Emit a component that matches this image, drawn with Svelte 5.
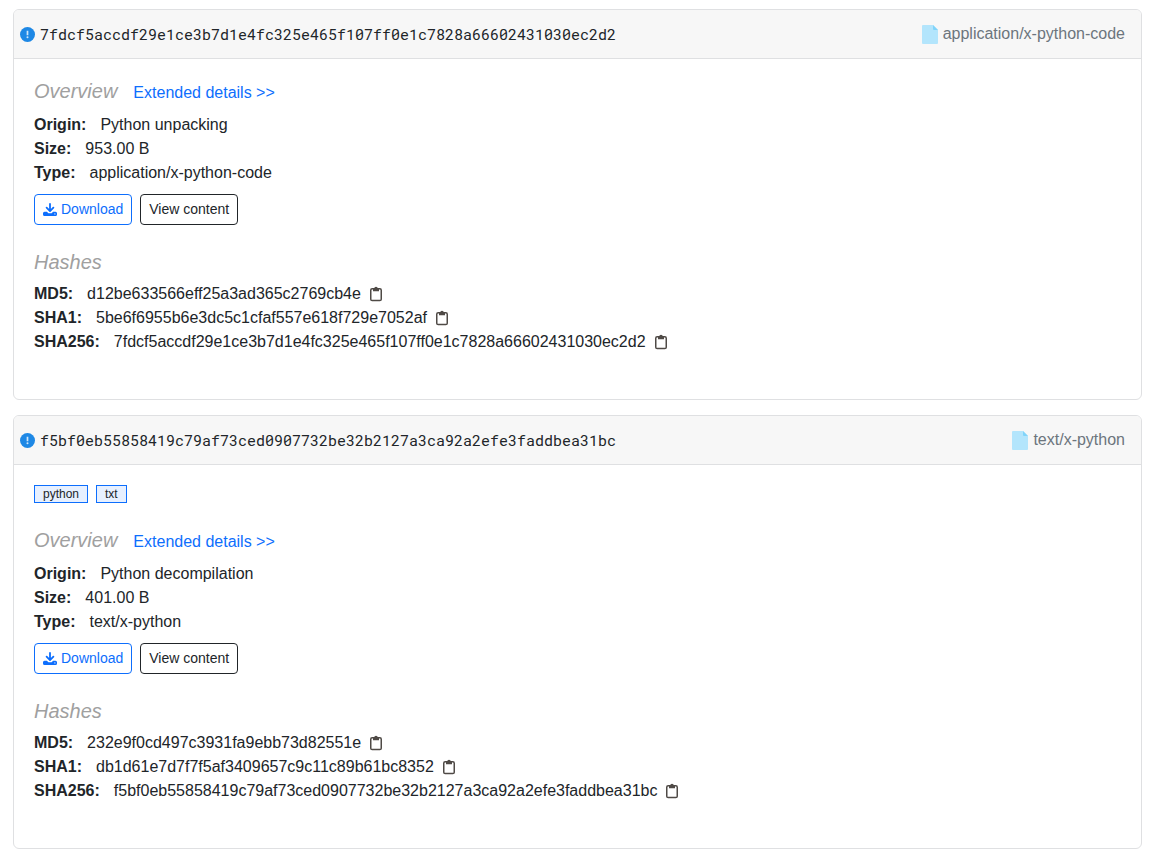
<script lang="ts">
  interface ExtractedFile {
    origin: string;
    size: string;
    type: string;
    tags: string[];
    md5: string;
    sha1: string;
    sha256: string;
  }

  const files: ExtractedFile[] = [
    {
      origin: 'Python unpacking',
      size: '953.00 B',
      type: 'application/x-python-code',
      tags: [],
      md5: 'd12be633566eff25a3ad365c2769cb4e',
      sha1: '5be6f6955b6e3dc5c1cfaf557e618f729e7052af',
      sha256: '7fdcf5accdf29e1ce3b7d1e4fc325e465f107ff0e1c7828a66602431030ec2d2',
    },
    {
      origin: 'Python decompilation',
      size: '401.00 B',
      type: 'text/x-python',
      tags: ['python', 'txt'],
      md5: '232e9f0cd497c3931fa9ebb73d82551e',
      sha1: 'db1d61e7d7f7f5af3409657c9c11c89b61bc8352',
      sha256: 'f5bf0eb55858419c79af73ced0907732be32b2127a3ca92a2efe3faddbea31bc',
    },
  ];

  function copy(value: string) {
    navigator.clipboard?.writeText(value);
  }
</script>

{#snippet detail(label: string, value: string)}
  <div class="row">
    <dt>{label}:</dt>
    <dd>{value}</dd>
  </div>
{/snippet}

{#snippet hash(label: string, value: string)}
  <div class="row">
    <dt>{label}:</dt>
    <dd>
      {value}
      <button class="copy" type="button" aria-label="Copy {label}" onclick={() => copy(value)}>
        <svg width="12" height="16" viewBox="0 0 12 16" fill="none" stroke="currentColor">
          <rect x="0.75" y="2.75" width="10.5" height="11.8" rx="1.4" stroke-width="1.5" />
          <path d="M3 2.5h1.2a1.8 1.8 0 0 1 3.6 0H9v2.7H3z" fill="currentColor" stroke="none" />
        </svg>
      </button>
    </dd>
  </div>
{/snippet}

<main>
  {#each files as file}
    <article class="card">
      <header>
        <svg class="verdict" width="15" height="15" viewBox="0 0 15 15" aria-hidden="true">
          <circle cx="7.5" cy="7.5" r="7.5" fill="#1e88e5" />
          <path d="M7.5 3.8v4.4" stroke="#cfe5f9" stroke-width="1.7" />
          <circle cx="7.5" cy="10.3" r="1" fill="#cfe5f9" />
        </svg>
        <span class="name">{file.sha256}</span>
        <span class="mime">
          <svg width="16" height="19" viewBox="0 0 16 19" aria-hidden="true">
            <path d="M1 0h10l5 5v13a1 1 0 0 1-1 1H1a1 1 0 0 1-1-1V1a1 1 0 0 1 1-1z" fill="#b3e5fc" />
            <path d="M11 0l5 5h-4a1 1 0 0 1-1-1z" fill="#81d4fa" />
          </svg>
          {file.type}
        </span>
      </header>

      <div class="body">
        {#if file.tags.length}
          <div class="tags">
            {#each file.tags as tag}
              <span class="tag">{tag}</span>
            {/each}
          </div>
        {/if}

        <div class="title">
          <h2>Overview</h2>
          <a href="#{file.sha256}">Extended details &gt;&gt;</a>
        </div>
        <dl>
          {@render detail('Origin', file.origin)}
          {@render detail('Size', file.size)}
          {@render detail('Type', file.type)}
        </dl>
        <div class="actions">
          <button class="btn primary" type="button">
            <svg width="14" height="14" viewBox="0 0 14 14" aria-hidden="true">
              <path d="M7 0.9v7M3.6 4.7L7 8.1l3.4-3.4" fill="none" stroke="currentColor" stroke-width="1.8" stroke-linecap="round" stroke-linejoin="round" />
              <path d="M1.5 8.7h2.4L5.4 10.2h3.2l1.5-1.5h2.4A1.5 1.5 0 0 1 14 10.2v1.3a1.5 1.5 0 0 1-1.5 1.5h-11A1.5 1.5 0 0 1 0 11.5v-1.3a1.5 1.5 0 0 1 1.5-1.5z" fill="currentColor" />
              <circle cx="11.9" cy="10.9" r="0.6" fill="#fff" />
            </svg>
            Download
          </button>
          <button class="btn" type="button">View content</button>
        </div>

        <div class="title hashes">
          <h2>Hashes</h2>
        </div>
        <dl>
          {@render hash('MD5', file.md5)}
          {@render hash('SHA1', file.sha1)}
          {@render hash('SHA256', file.sha256)}
        </dl>
      </div>
    </article>
  {/each}
</main>

<style>
  :global(body) {
    background: #fff;
    color: #212529;
    font: 16px/24px 'Liberation Sans', Arial, sans-serif;
  }

  main {
    display: flex;
    flex-direction: column;
    gap: 15px;
    padding: 9px 9px 13px 13px;
  }

  .card {
    border: 1px solid #dfe0e2;
    border-radius: 6px;
    overflow: hidden;
  }

  header {
    display: flex;
    align-items: center;
    gap: 5px;
    padding: 12px 16px 12px 6px;
    background: #f7f7f7;
    border-bottom: 1px solid #dfe0e2;
  }

  .verdict { flex-shrink: 0; }

  .name {
    flex: 1;
    min-width: 0;
    overflow-wrap: anywhere;
    font-family: 'Roboto Mono', 'Liberation Mono', monospace;
    font-size: 15px;
  }

  .mime {
    display: flex;
    align-items: center;
    gap: 5px;
    color: #6c757d;
  }

  .body { padding: 20px 20px 45px; }

  .tags {
    display: flex;
    gap: 8px;
    margin-bottom: 25px;
  }

  .tag {
    padding: 0 8px;
    border: 1px solid #0d6efd;
    background: #e7f0ff;
    font-size: 12px;
    line-height: 16px;
  }

  .title {
    display: flex;
    align-items: baseline;
    gap: 16px;
    margin-bottom: 8px;
  }

  .hashes { margin-top: 25px; }

  h2 {
    margin: 0;
    color: #a0a0a0;
    font-size: 20px;
    font-style: italic;
    font-weight: 400;
    line-height: 24px;
  }

  a {
    color: #0d6efd;
    text-decoration: none;
  }

  a:hover { text-decoration: underline; }

  dl { margin: 0; }

  .row {
    display: flex;
    gap: 14px;
  }

  dt { font-weight: 700; }

  dd {
    display: flex;
    align-items: center;
    gap: 9px;
    min-width: 0;
    margin: 0;
    overflow-wrap: anywhere;
  }

  .copy {
    display: flex;
    padding: 0;
    border: 0;
    background: none;
    color: #4f4a46;
    cursor: pointer;
  }

  .actions {
    display: flex;
    gap: 8px;
    margin-top: 9px;
  }

  .btn {
    display: flex;
    align-items: center;
    gap: 4px;
    padding: 4px 8px;
    border: 1px solid #212529;
    border-radius: 4px;
    background: #fff;
    color: #212529;
    font: inherit;
    font-size: 14px;
    line-height: 21px;
    cursor: pointer;
  }

  .btn.primary {
    border-color: #0d6efd;
    color: #0d6efd;
  }
</style>
